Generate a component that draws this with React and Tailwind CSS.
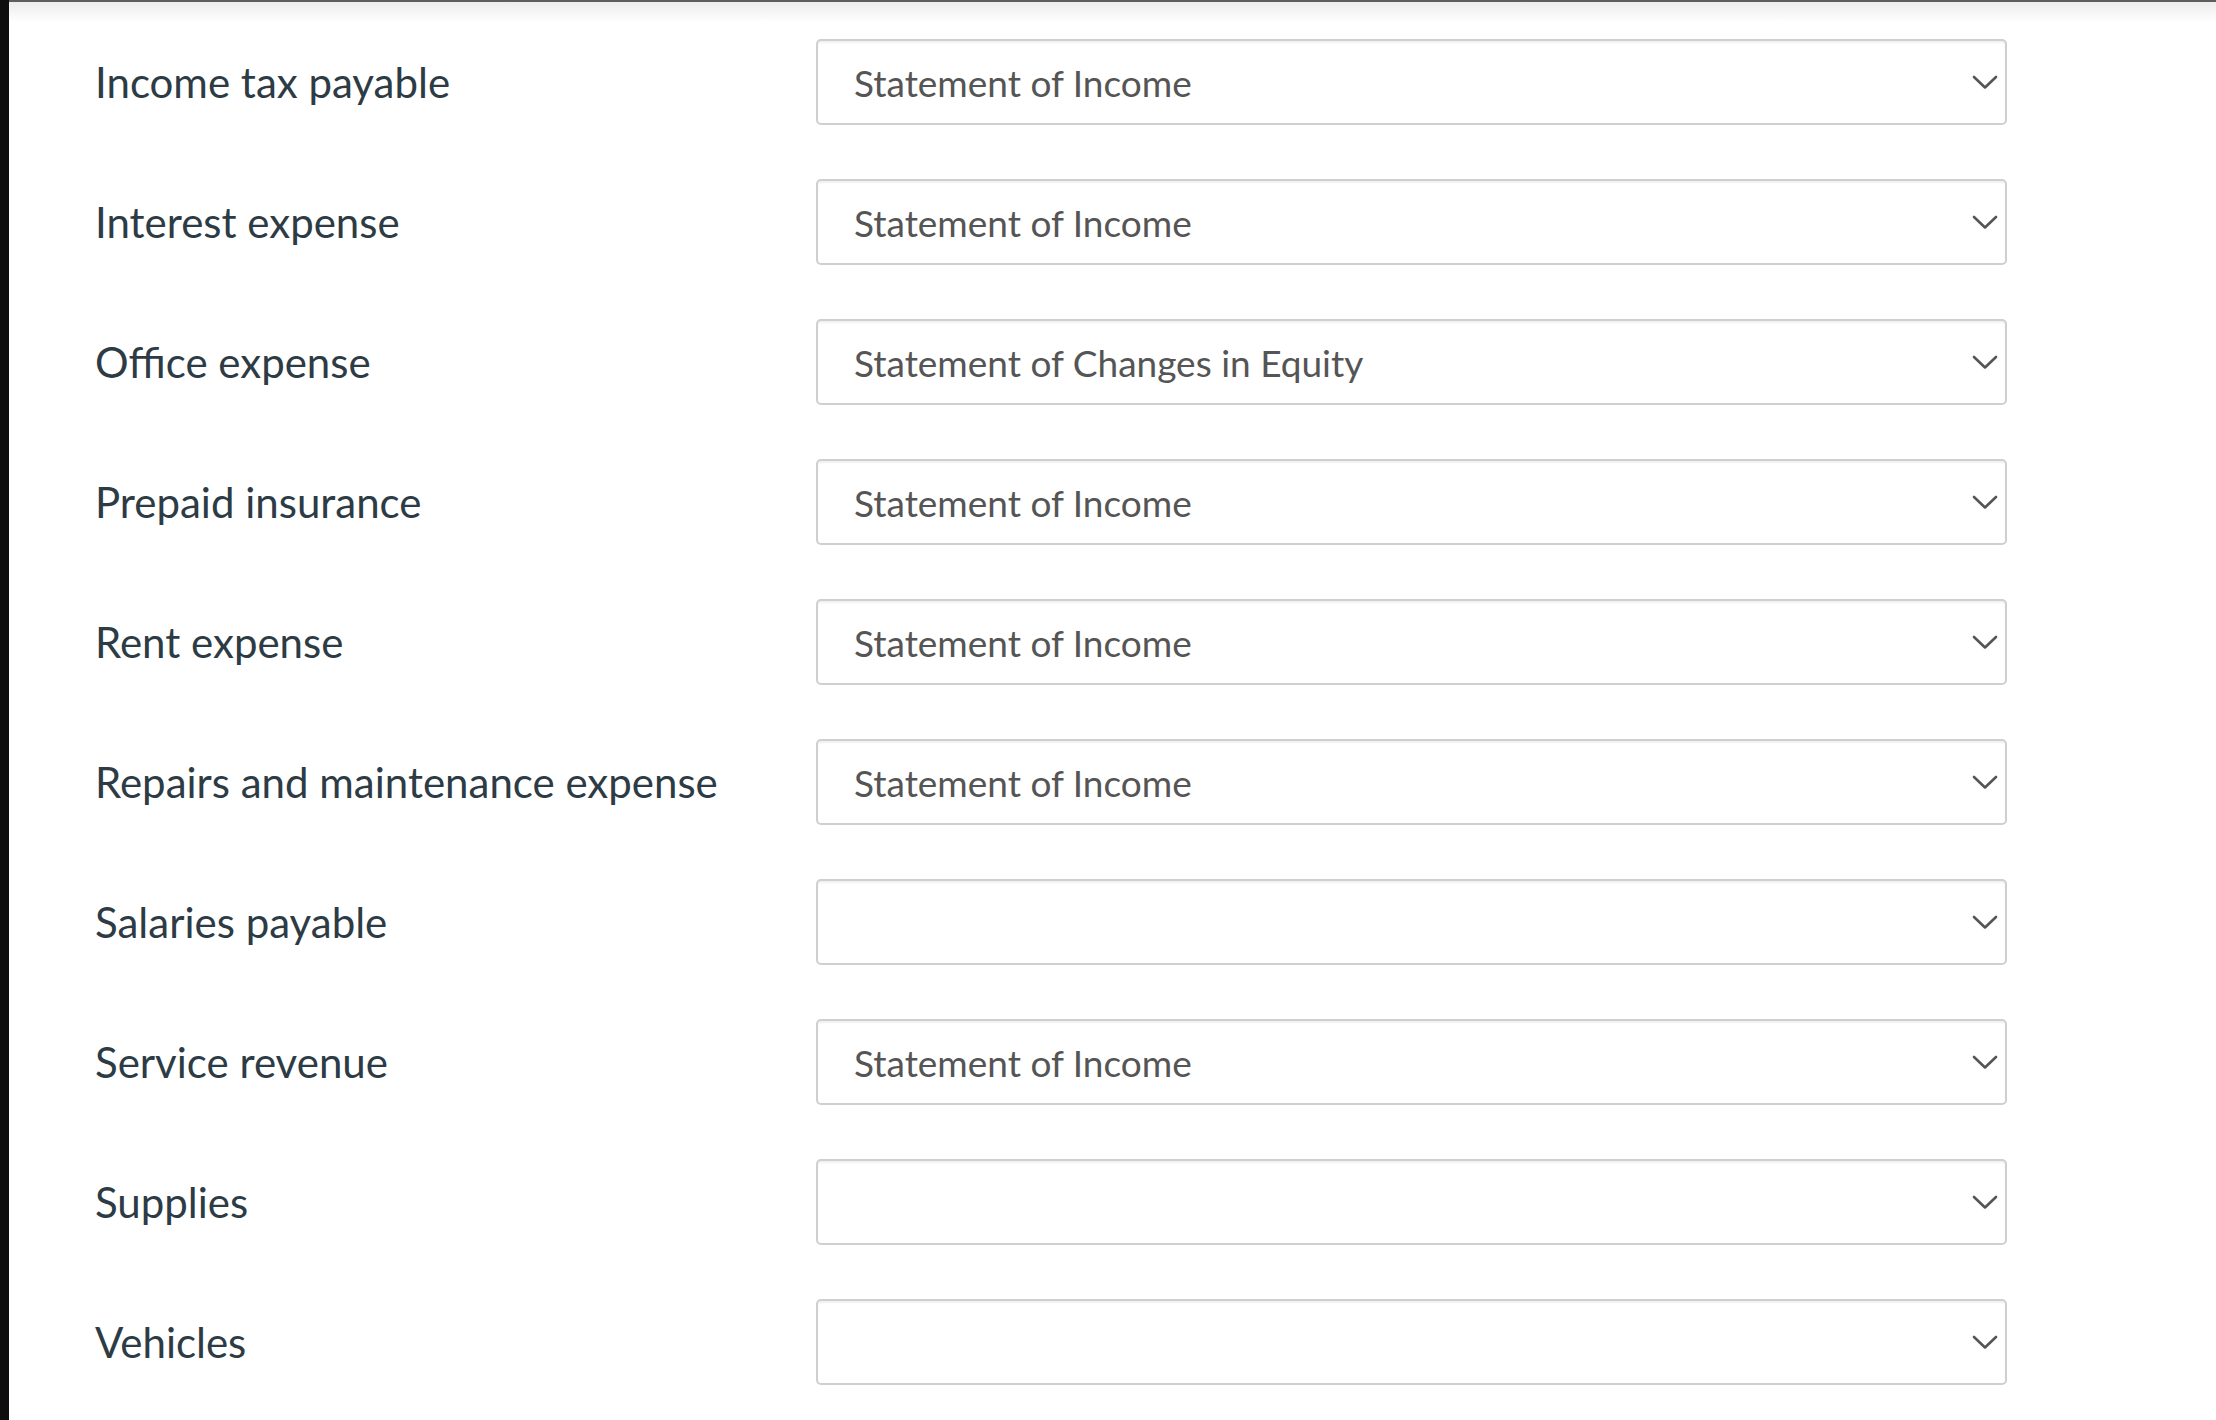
const rows = [
  { label: "Income tax payable", value: "Statement of Income" },
  { label: "Interest expense", value: "Statement of Income" },
  { label: "Office expense", value: "Statement of Changes in Equity" },
  { label: "Prepaid insurance", value: "Statement of Income" },
  { label: "Rent expense", value: "Statement of Income" },
  { label: "Repairs and maintenance expense", value: "Statement of Income" },
  { label: "Salaries payable", value: "" },
  { label: "Service revenue", value: "Statement of Income" },
  { label: "Supplies", value: "" },
  { label: "Vehicles", value: "" },
];

function SelectBox({ value }) {
  return (
    <div className="w-[1191px] h-[86px] flex items-center justify-between pl-[36px] pr-[7px] border-2 border-[#cfcfcf] rounded-[5px] bg-white shadow-[inset_0_2px_2px_rgba(0,0,0,0.06)]">
      <span className="text-[37px] text-[#555555] leading-none">{value}</span>
      <svg width="26" height="15" viewBox="0 0 26 15" fill="none" className="text-[#555555]">
        <path d="M2 2 L13 12.5 L24 2" stroke="currentColor" strokeWidth="2.6" strokeLinecap="round" strokeLinejoin="round" />
      </svg>
    </div>
  );
}

export default function App() {
  return (
    <div className="w-full h-screen flex bg-white overflow-hidden" style={{ fontFamily: "Lato, 'Open Sans', sans-serif" }}>
      <div className="w-[9px] shrink-0 bg-[#0e0e0e]" />
      <div className="flex-1 flex flex-col">
        <div className="h-[2px] bg-[#5d5d62] shrink-0" />
        <div className="h-[20px] -mb-[20px] shrink-0 bg-gradient-to-b from-[#ececec] to-white" />
        <div className="flex-1 flex flex-col gap-[54px] pt-[37px] pl-[86px]">
          {rows.map((r) => (
            <div key={r.label} className="flex items-center">
              <div className="w-[721px] shrink-0 text-[42px] text-[#2d3b45] leading-none">{r.label}</div>
              <SelectBox value={r.value} />
            </div>
          ))}
        </div>
      </div>
    </div>
  );
}
